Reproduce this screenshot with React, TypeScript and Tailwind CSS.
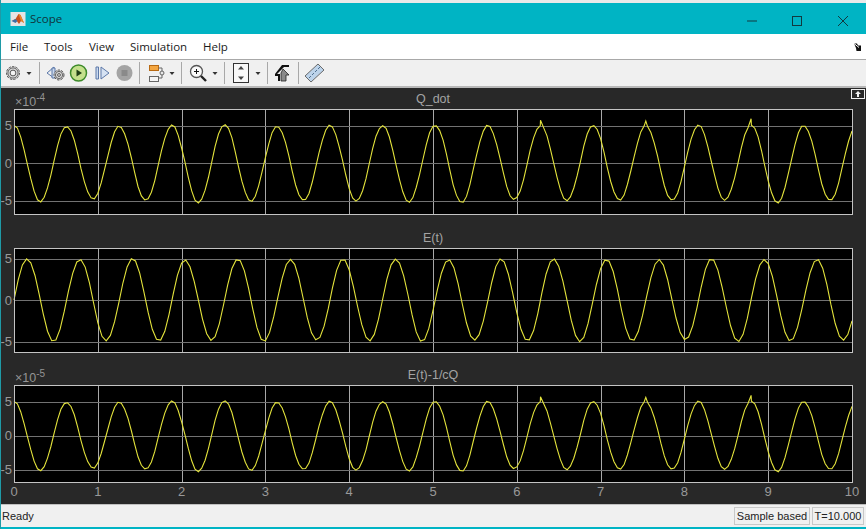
import React from 'react';

const W0 = 14;
const PX_PER_T = 83.8;

// amplitude of each half cycle, read off the trace
const qAmps = [5, 5.15, 4.9, 4.8, 4.9, 5, 5.05, 5.3, 5.15, 5.1, 4.9, 5, 5, 5.1, 5, 5.2, 5.05, 5.3, 5, 4.9, 5, 5, 5.05, 4.95, 5, 5, 5.05, 4.95, 5.1, 5.3, 5, 5, 5];
const spikes: Record<number, number> = { 20: 5.7, 24: 5.6, 28: 5.9 };
const eAmps = [4.9, 4.85, 4.9, 4.75, 4.9, 4.8, 4.85, 4.9, 4.8, 4.85, 4.9, 4.85, 4.75, 4.9, 4.85, 4.8, 4.9];

function qPoints() {
  const pts: [number, number][] = [];
  for (let i = 0; i <= 250; i++) {
    const t = i * 0.04;
    const n = Math.round((10 * t) / Math.PI);
    pts.push([t, qAmps[n] * Math.cos(10 * t) + 0.06 * Math.sin(37 * t)]);
    const tp = (n * Math.PI) / 10;
    if (spikes[n] && tp > t && tp < t + 0.04) pts.push([tp, spikes[n]]);
  }
  return pts;
}

function ePoints() {
  const pts: [number, number][] = [];
  for (let i = 0; i <= 200; i++) {
    const t = i * 0.05;
    const n = Math.floor((10 * t) / (2 * Math.PI));
    pts.push([t, (eAmps[n % eAmps.length] + 0.08) * Math.sin(10 * t) + 0.05 * Math.sin(23 * t)]);
  }
  return pts;
}

function Axes({ height, zero, unit, yLabels, exponent, points, showX }: {
  height: number;
  zero: number;
  unit: number;
  yLabels: boolean;
  exponent?: string;
  points: [number, number][];
  showX?: boolean;
}) {
  const poly = points.map(([t, v]) => `${(W0 + t * PX_PER_T).toFixed(1)},${(zero - v * unit).toFixed(1)}`).join(' ');
  const ticks = [5, 0, -5];
  const xs = [0, 1, 2, 3, 4, 5, 6, 7, 8, 9, 10];
  return (
    <svg width="866" height={height + 1} className="block overflow-visible" style={{ fontFamily: '"Liberation Sans", sans-serif' }}>
      <rect x="14.5" y="0.5" width="838" height={height} fill="#000" />
      {xs.slice(1, 10).map((x) => (
        <line key={x} x1={Math.round(W0 + x * PX_PER_T) + 0.5} x2={Math.round(W0 + x * PX_PER_T) + 0.5} y1="0" y2={height} stroke="#a8a8a8" />
      ))}
      {ticks.map((v) => (
        <line key={v} x1="14" x2="852" y1={Math.round(zero - v * unit) + 0.5} y2={Math.round(zero - v * unit) + 0.5} stroke="#727272" />
      ))}
      <polyline points={poly} fill="none" stroke="#e4e43c" strokeWidth="1.1" />
      <rect x="14.5" y="0.5" width="838" height={height} fill="none" stroke="#c4c4c4" />
      {yLabels && ticks.map((v) => (
        <text key={v} x="12" y={zero - v * unit + 4.5} textAnchor="end" fontSize="13" fill="#999">{v}</text>
      ))}
      {exponent && (
        <text x="15" y="-3" fontSize="12.5" fill="#949494">
          ×10<tspan dy="-5" fontSize="10">{exponent}</tspan>
        </text>
      )}
      {showX && xs.map((x) => (
        <text key={x} x={W0 + x * PX_PER_T} y={height + 14} textAnchor="middle" fontSize="13" fill="#999">{x}</text>
      ))}
    </svg>
  );
}

function PlotTitle({ children }: { children: React.ReactNode }) {
  return (
    <div className="mb-1 h-[14px] text-center font-['Liberation_Sans',sans-serif] text-[12.5px] leading-[16px] text-[#a4a4a4]">
      {children}
    </div>
  );
}

function Caret({ w = 12 }: { w?: number }) {
  return (
    <svg width={w} height="26" viewBox={`0 0 ${w} 26`} className="shrink-0">
      <path d={`M${w / 2 - 2.5} 12h5l-2.5 3z`} fill="#333" />
    </svg>
  );
}

function Sep({ w = 9 }: { w?: number }) {
  return (
    <div className="flex shrink-0 justify-center" style={{ width: w }}>
      <div className="h-[22px] w-px bg-[#a8a8a8]" />
    </div>
  );
}

function Icon({ w = 23, children }: { w?: number; children: React.ReactNode }) {
  return (
    <svg width={w} height="26" viewBox={`0 0 ${w} 26`} className="shrink-0">
      {children}
    </svg>
  );
}

function Gear({ cx, cy, r }: { cx: number; cy: number; r: number }) {
  return (
    <g>
      <circle cx={cx} cy={cy} r={r} fill="#cfcfcf" stroke="#555" strokeWidth="1" strokeDasharray="2.4 1.2" />
      <circle cx={cx} cy={cy} r={r - 1.4} fill="#d8d8d8" stroke="#666" strokeWidth="1" />
      <circle cx={cx} cy={cy} r={r - 3.6} fill="#f4f4f4" stroke="#555" strokeWidth="1" />
    </g>
  );
}

export default function App() {
  const q = qPoints();
  const e = ePoints();
  return (
    <div className="relative flex h-[529px] w-[866px] flex-col overflow-hidden bg-[#f0f0f0] font-['Open_Sans',sans-serif]">
      <div className="h-[3px] shrink-0 bg-[#e9e9e9]" />

      {/* title bar */}
      <div className="flex h-[31px] shrink-0 items-center bg-[#00b4c4] pl-[10px]">
        <svg width="16" height="16" viewBox="0 0 16 16" className="shrink-0">
          <rect x="0.5" y="1" width="15" height="14" fill="#e4e4e4" />
          <path d="M1.5 10l4-2 3-5 2 1 3.5 8-3-2-2 3-3-4z" fill="#c8501c" />
          <path d="M1.5 10l4-2 2 2-2 2z" fill="#3d6ea5" />
          <path d="M8.5 3l2 1 3.5 8-3-2z" fill="#e88a2a" />
        </svg>
        <span className="ml-[4px] text-[11.5px] text-[#10333a]">Scope</span>
        <div className="ml-auto flex items-center">
          <svg width="46" height="31" viewBox="0 0 46 31"><path d="M11 18h10" stroke="#12393f" /></svg>
          <svg width="46" height="31" viewBox="0 0 46 31"><rect x="10.5" y="13.5" width="9" height="9" fill="none" stroke="#12393f" /></svg>
          <svg width="38" height="31" viewBox="0 0 38 31"><path d="M10 13l10 10M20 13L10 23" stroke="#12393f" /></svg>
        </div>
      </div>

      {/* menu bar */}
      <div className="flex h-[26px] shrink-0 items-center border-b border-[#a8a8a8] bg-white pl-[10px] text-[11.5px] text-[#1a1a1a]">
        <span className="w-[34px]">File</span>
        <span className="w-[45px]">Tools</span>
        <span className="w-[41px]">View</span>
        <span className="w-[73px]">Simulation</span>
        <span>Help</span>
        <svg width="10" height="10" viewBox="0 0 10 10" className="ml-auto mr-[3px]">
          <path d="M1 1.5h3l1 2h3v5.5H3.5L3 6z" fill="#111" />
          <path d="M1 1.5l5 4" stroke="#fff" />
        </svg>
      </div>

      {/* toolbar */}
      <div className="flex h-[28px] shrink-0 items-center border-b-2 border-[#b8b8b8] bg-[#f0f0f0] pl-[3px]">
        <Icon w={20}><Gear cx={10} cy={13} r={6.5} /></Icon>
        <Caret />
        <Sep />
        <Icon>
          <path d="M3 13l7-6v3M3 13l7 5" fill="#d6e2f2" stroke="#5c78a8" />
          <path d="M8 8h3v10H8z" fill="#c9d8ee" stroke="#5c78a8" />
          <Gear cx={15} cy={15} r={5} />
        </Icon>
        <Icon>
          <circle cx="11.5" cy="13" r="8" fill="#c4e08c" stroke="#3d8a2a" strokeWidth="1.5" />
          <path d="M9.5 9.5l5.5 3.5-5.5 3.5z" fill="#1f3f16" />
        </Icon>
        <Icon>
          <path d="M6 7h2.5v12H6z" fill="#c9d8ee" stroke="#5c78a8" />
          <path d="M11 7l8 6-8 6z" fill="#d6e2f2" stroke="#5c78a8" />
        </Icon>
        <Icon>
          <circle cx="11.5" cy="13" r="8" fill="#a4a4a4" />
          <rect x="8.5" y="10" width="6" height="6" fill="#8a8a8a" />
        </Icon>
        <Sep w={7} />
        <Icon w={24}>
          <rect x="6.5" y="5.5" width="9" height="5" fill="#f4a640" stroke="#b86a14" />
          <rect x="6.5" y="16.5" width="9" height="5" fill="#f4f4f4" stroke="#666" />
          <path d="M15.5 8H19v10h-3.5M19 13h2" fill="none" stroke="#666" />
          <circle cx="19" cy="13" r="2" fill="#e8e8e8" stroke="#666" />
        </Icon>
        <Caret w={10} />
        <Sep />
        <Icon w={24}>
          <circle cx="10.5" cy="11.5" r="6" fill="#fafafa" stroke="#555" strokeWidth="1.3" />
          <path d="M8 11.5h5M10.5 9v5" stroke="#111" />
          <path d="M15 16l5 5" stroke="#222" strokeWidth="2.4" />
        </Icon>
        <Caret w={10} />
        <Sep />
        <Icon w={24}>
          <rect x="4.5" y="3.5" width="15" height="19" fill="#f8f8f8" stroke="#333" />
          <path d="M12 6l-3 3.5h6zM12 20l-3-3.5h6z" fill="#444" />
        </Icon>
        <Caret w={10} />
        <Sep />
        <Icon w={22}>
          <path d="M10 5h7v2h-5L5 14h3v7H6v-5H3v-2z" fill="#111" />
          <path d="M11 9l6 6h-3v6h-5v-8z" fill="#8a8a8a" stroke="#222" strokeWidth="0.8" />
        </Icon>
        <Sep w={8} />
        <Icon w={24}>
          <path d="M3 16L16 4l6 6-13 12z" fill="#bcd3ea" stroke="#6a6a6a" />
          <path d="M7 18l2-2M10 15l2-2M13 12l2-2M16 9l2-2" stroke="#50708f" />
        </Icon>
      </div>

      {/* plots */}
      <div className="relative flex min-h-0 flex-1 flex-col bg-[#282828] pt-[3px]">
        <svg width="14" height="11" viewBox="0 0 14 11" className="absolute right-[1px] top-[1px]">
          <rect x="0.5" y="0.5" width="13" height="9" fill="#282828" stroke="#f0f0f0" />
          <path d="M7 2l3 3H8v3H6V5H4z" fill="#f0f0f0" />
        </svg>
        <PlotTitle>Q_dot</PlotTitle>
        <Axes height={105} zero={54} unit={7.5} yLabels exponent="-4" points={q} />
        <div className="mt-[15px]">
          <PlotTitle>E(t)</PlotTitle>
          <Axes height={104} zero={52} unit={8.3} yLabels points={e} />
        </div>
        <div className="mt-[14px]">
          <PlotTitle>E(t)-1/cQ</PlotTitle>
          <Axes height={97} zero={50.5} unit={6.8} yLabels exponent="-5" points={q} showX />
        </div>
      </div>

      {/* status bar */}
      <div className="flex h-[23px] shrink-0 items-center border-t border-[#c0c0c0] bg-[#f0f0f0] pl-[2px] font-['Liberation_Sans',sans-serif] text-[11px] text-[#222]">
        <span>Ready</span>
        <div className="ml-auto mr-[2px] flex h-[18px] gap-[2px]">
          <div className="flex w-[76px] items-center justify-center border border-[#c8c8c8]">Sample based</div>
          <div className="flex w-[52px] items-center justify-center border border-[#c8c8c8]">T=10.000</div>
        </div>
      </div>
      <div className="h-[2px] shrink-0 bg-[#00b4c4]" />

      <div className="absolute inset-y-0 left-0 w-px bg-[#1f9aa6]" />
    </div>
  );
}
